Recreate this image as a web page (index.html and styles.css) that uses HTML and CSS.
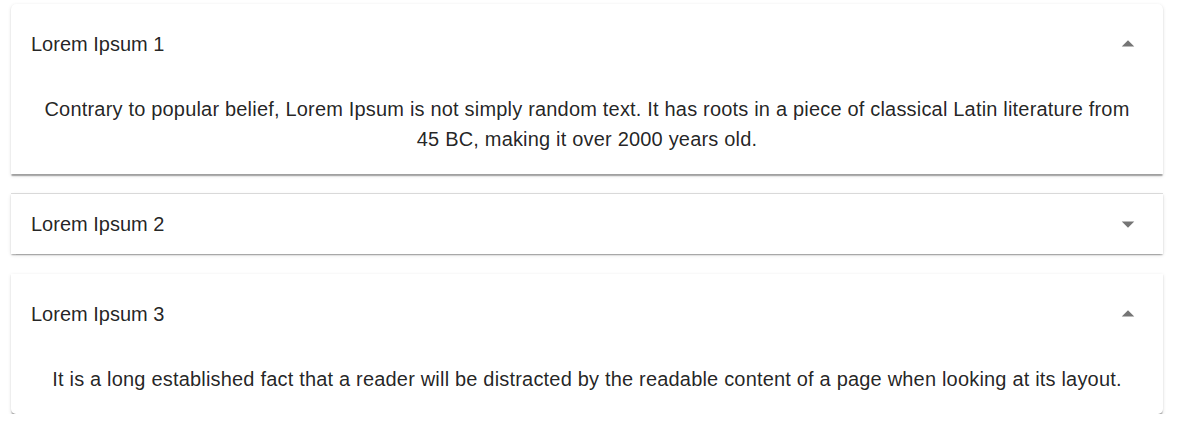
FILE: index.html
```html
<!DOCTYPE html>
<html lang="en">
<head>
<meta charset="utf-8">
<title>Accordion</title>
<link rel="stylesheet" href="styles.css">
</head>
<body>
<div class="accordions">
  <div class="accordion expanded first">
    <div class="summary">
      <div class="title">Lorem Ipsum 1</div>
      <div class="icon-btn">
        <svg class="icon up" viewBox="0 0 24 24" width="30" height="30"><path d="M7 10l5 5 5-5z"/></svg>
      </div>
    </div>
    <div class="details">Contrary to popular belief, Lorem Ipsum is not simply random text. It has roots in a piece of classical Latin literature from 45 BC, making it over 2000 years old.</div>
  </div>
  <div class="accordion divided">
    <div class="summary collapsed">
      <div class="title">Lorem Ipsum 2</div>
      <div class="icon-btn">
        <svg class="icon" viewBox="0 0 24 24" width="30" height="30"><path d="M7 10l5 5 5-5z"/></svg>
      </div>
    </div>
  </div>
  <div class="accordion expanded last">
    <div class="summary">
      <div class="title">Lorem Ipsum 3</div>
      <div class="icon-btn">
        <svg class="icon up" viewBox="0 0 24 24" width="30" height="30"><path d="M7 10l5 5 5-5z"/></svg>
      </div>
    </div>
    <div class="details">It is a long established fact that a reader will be distracted by the readable content of a page when looking at its layout.</div>
  </div>
</div>
</body>
</html>
```
FILE: styles.css
```css
html, body {
  margin: 0;
  padding: 0;
  background: #fff;
}
body {
  font-family: "Liberation Sans", Arial, sans-serif;
  color: rgba(0, 0, 0, 0.87);
}
.accordions {
  padding: 4px 15px 0 11px;
  display: flex;
  flex-direction: column;
  gap: 20px;
}
.accordion {
  background: #fff;
  box-shadow: 0 2.5px 1.25px -1.25px rgba(0,0,0,0.2), 0 1.25px 1.25px 0 rgba(0,0,0,0.14), 0 1.25px 3.75px 0 rgba(0,0,0,0.12);
}
.accordion.divided {
  box-shadow: 0 -1px 0 rgba(0,0,0,0.12), 0 2.5px 1.25px -1.25px rgba(0,0,0,0.2), 0 1.25px 1.25px 0 rgba(0,0,0,0.14), 0 1.25px 3.75px 0 rgba(0,0,0,0.12);
}
.first {
  border-top-left-radius: 5px;
  border-top-right-radius: 5px;
}
.last {
  border-bottom-left-radius: 5px;
  border-bottom-right-radius: 5px;
}
.summary {
  height: 80px;
  display: flex;
  align-items: center;
  padding: 0 20px;
}
.summary.collapsed {
  height: 60px;
}
.title {
  flex: 1;
  font-size: 20px;
  line-height: 30px;
}
.icon-btn {
  width: 60px;
  height: 60px;
  margin-right: -15px;
  display: flex;
  align-items: center;
  justify-content: center;
}
.icon {
  fill: rgba(0, 0, 0, 0.54);
  display: block;
}
.icon.up {
  transform: rotate(180deg);
}
.details {
  padding: 10px 20px 20px;
  font-size: 20px;
  line-height: 30px;
  letter-spacing: 0.00938em;
  text-align: center;
}
```
